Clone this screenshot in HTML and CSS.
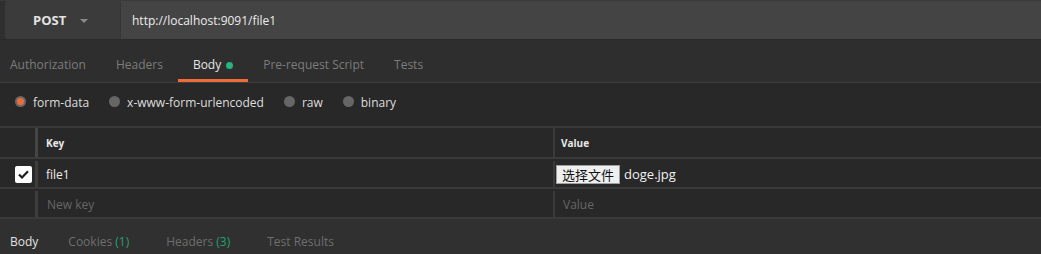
FILE: index.html
```html
<!DOCTYPE html>
<html lang="en">
<head>
<meta charset="UTF-8">
<title>Request</title>
<link rel="stylesheet" href="styles.css">
</head>
<body>
<div class="request-bar">
  <div class="method">POST <span class="caret"></span></div>
  <div class="url">http://localhost:9091/file1</div>
</div>

<div class="tabs">
  <div class="tab first">Authorization</div>
  <div class="tab">Headers</div>
  <div class="tab active">Body <span class="dot"></span></div>
  <div class="tab">Pre-request Script</div>
  <div class="tab">Tests</div>
</div>

<div class="modes">
  <label class="mode"><span class="radio checked"></span>form-data</label>
  <label class="mode"><span class="radio"></span>x-www-form-urlencoded</label>
  <label class="mode"><span class="radio"></span>raw</label>
  <label class="mode"><span class="radio"></span>binary</label>
</div>

<div class="params">
  <div class="row head">
    <div class="cell check"></div>
    <div class="cell key">Key</div>
    <div class="cell value">Value</div>
  </div>
  <div class="row">
    <div class="cell check">
      <span class="checkbox">
        <svg width="11" height="9" viewBox="0 0 11 9"><path d="M1 4.5 L4 7.5 L10 1.2" fill="none" stroke="#1e1e1e" stroke-width="2.2"/></svg>
      </span>
    </div>
    <div class="cell key filled">file1</div>
    <div class="cell value"><span class="file-btn">选择文件</span><span class="file-name">doge.jpg</span></div>
  </div>
  <div class="row">
    <div class="cell check"></div>
    <div class="cell key placeholder">New key</div>
    <div class="cell value placeholder">Value</div>
  </div>
</div>

<div class="response-tabs">
  <div class="rtab active">Body</div>
  <div class="rtab">Cookies <span class="count">(1)</span></div>
  <div class="rtab">Headers <span class="count">(3)</span></div>
  <div class="rtab">Test Results</div>
</div>
</body>
</html>
```

FILE: styles.css
```css
body {
  margin: 0;
  background-color: #303030;
  font-family: "Open Sans", Arial, sans-serif;
  font-size: 12px;
  color: #dcdcdc;
}

/* url bar */
.request-bar {
  display: flex;
  height: 40px;
  padding-left: 5px;
  background-color: #2f2f2f;
  border-top: 1px solid #3a3a3a;
  border-bottom: 1px solid #2a2a2a;
  box-sizing: border-box;
}

.method {
  width: 116px;
  display: flex;
  align-items: center;
  padding-left: 28px;
  box-sizing: border-box;
  background-color: #3b3b3b;
  border-right: 1px solid #363636;
  border-radius: 3px 0 0 3px;
  font-size: 13px;
  font-weight: bold;
  color: #e2e2e2;
}

.caret {
  margin-left: 14px;
  margin-top: 2px;
  border-left: 4px solid transparent;
  border-right: 4px solid transparent;
  border-top: 4px solid #8a8a8a;
}

.url {
  flex: 1;
  display: flex;
  align-items: center;
  padding-left: 11px;
  background-color: #444444;
  color: #ececec;
}

/* request tabs */
.tabs {
  display: flex;
  height: 43px;
  background-color: #2e2e2e;
  border-bottom: 1px solid #3f3f3f;
  box-sizing: border-box;
}

.tab {
  padding: 16px 15px 0;
  color: #7c7c7c;
  display: flex;
  align-items: flex-start;
  border-bottom: 3px solid transparent;
}

.tab.first {
  padding-left: 10px;
}

.tab.active {
  color: #e6e6e6;
  border-bottom-color: #ef6c3a;
}

.dot {
  width: 7px;
  height: 7px;
  border-radius: 50%;
  background-color: #26b47f;
  margin: 6px 0 0 5px;
}

/* body modes */
.modes {
  display: flex;
  align-items: center;
  gap: 20px;
  height: 45px;
  padding-left: 15px;
  padding-bottom: 4px;
  box-sizing: border-box;
  background-color: #282828;
  border-bottom: 2px solid #393939;
}

.mode {
  display: flex;
  align-items: center;
  color: #dedede;
}

.radio {
  width: 11px;
  height: 11px;
  border-radius: 50%;
  background-color: #666666;
  margin-right: 7px;
  margin-top: -3px;
  box-sizing: border-box;
}

.radio.checked {
  background-color: #ef6c3a;
  border: 2px solid #6a6a6a;
}

/* key / value table */
.params {
  background-color: #282828;
}

.row {
  display: flex;
  height: 30px;
  padding-top: 2px;
  border-bottom: 2px solid #3a3a3a;
  box-sizing: border-box;
}

.row.head {
  height: 31px;
  padding-top: 0;
}

.cell {
  display: flex;
  align-items: center;
  box-sizing: border-box;
}

.check {
  width: 38px;
  justify-content: center;
  padding-left: 12px;
  border-right: 3px solid #3d3d3d;
}

.head .check {
  border-right-color: #454545;
}

.key {
  width: 517px;
  padding-left: 8px;
  border-right: 2px solid #3a3a3a;
}

.value {
  flex: 1;
  padding-left: 1px;
}

.head .key,
.head .value {
  font-size: 10px;
  font-weight: bold;
  color: #e8e8e8;
}

.head .value {
  padding-left: 6px;
}

.filled {
  color: #ededed;
}

.placeholder {
  color: #666666;
}

.key.placeholder {
  padding-left: 9px;
}

.value.placeholder {
  padding-left: 8px;
}

.checkbox {
  width: 17px;
  height: 17px;
  border-radius: 2px;
  background-color: #ffffff;
  display: flex;
  align-items: center;
  justify-content: center;
}

.file-btn {
  font-family: "Noto Sans CJK SC", sans-serif;
  font-size: 13px;
  line-height: 17px;
  color: #111111;
  background-color: #efefef;
  border: 1px solid #a0a0a0;
  padding: 0 5px;
  white-space: nowrap;
}

.file-name {
  margin-left: 4px;
  font-size: 13px;
  color: #f0f0f0;
}

/* response tabs */
.response-tabs {
  display: flex;
  height: 35px;
  padding: 9px 0 0 10px;
  box-sizing: border-box;
  align-items: center;
}

.rtab {
  color: #6e6e6e;
  margin-right: 37px;
}

.rtab.active {
  color: #e2e2e2;
  margin-right: 30px;
}

.count {
  color: #21a372;
}
```
